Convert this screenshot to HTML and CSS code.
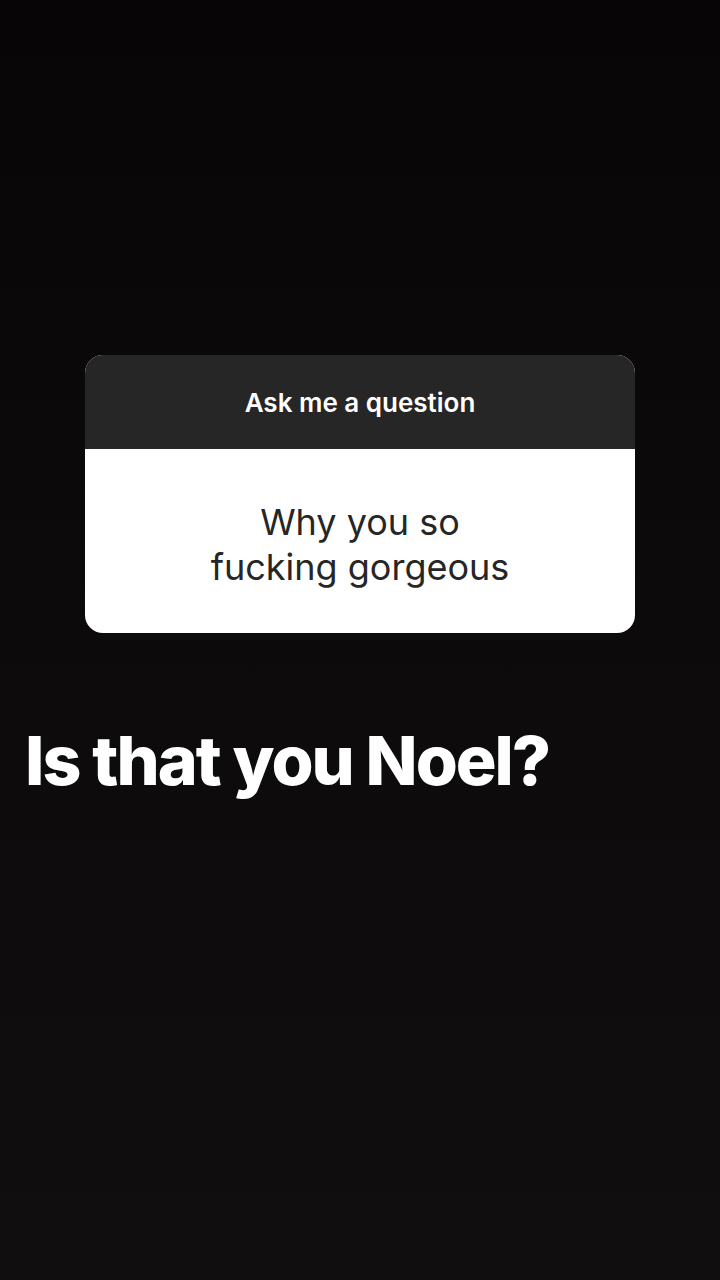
FILE: index.html
```html
<!DOCTYPE html>
<html lang="en">
<head>
    <meta charset="UTF-8">
    <meta name="viewport" content="width=device-width, initial-scale=1.0">
    <title>Story</title>
    <link rel="stylesheet" href="styles.css">
</head>
<body>
    <div class="story">
        <!-- Question sticker -->
        <div class="question-card">
            <div class="question-head">Ask me a question</div>
            <div class="question-body">Why you so<br>fucking gorgeous</div>
        </div>

        <h1 class="caption">Is that you Noel?</h1>
    </div>
</body>
</html>
```

FILE: styles.css
```css
body {
    margin: 0;
    background: #0c0a0a;
    font-family: Inter, 'Noto Sans', 'Liberation Sans', sans-serif;
}
.story {
    width: 720px;
    height: 1280px;
    background: linear-gradient(180deg, #070505 0%, #0c0a0a 45%, #110e0f 100%);
    display: flex;
    flex-direction: column;
    overflow: hidden;
}
.question-card {
    width: 550px;
    margin: 355px 0 0 85px;
    border-radius: 18px;
    overflow: hidden;
    background: #ffffff;
}
.question-head {
    height: 94px;
    background: #262626;
    color: #ffffff;
    font-size: 26px;
    font-weight: 600;
    display: flex;
    align-items: center;
    justify-content: center;
}
.question-body {
    height: 184px;
    display: flex;
    align-items: center;
    justify-content: center;
    text-align: center;
    color: #262626;
    font-size: 36px;
    line-height: 45px;
    padding-top: 8px;
    box-sizing: border-box;
}
.caption {
    margin: 87px 0 0 25px;
    color: #ffffff;
    font-size: 68px;
    font-weight: 800;
    letter-spacing: -2px;
    line-height: 80px;
}
```
